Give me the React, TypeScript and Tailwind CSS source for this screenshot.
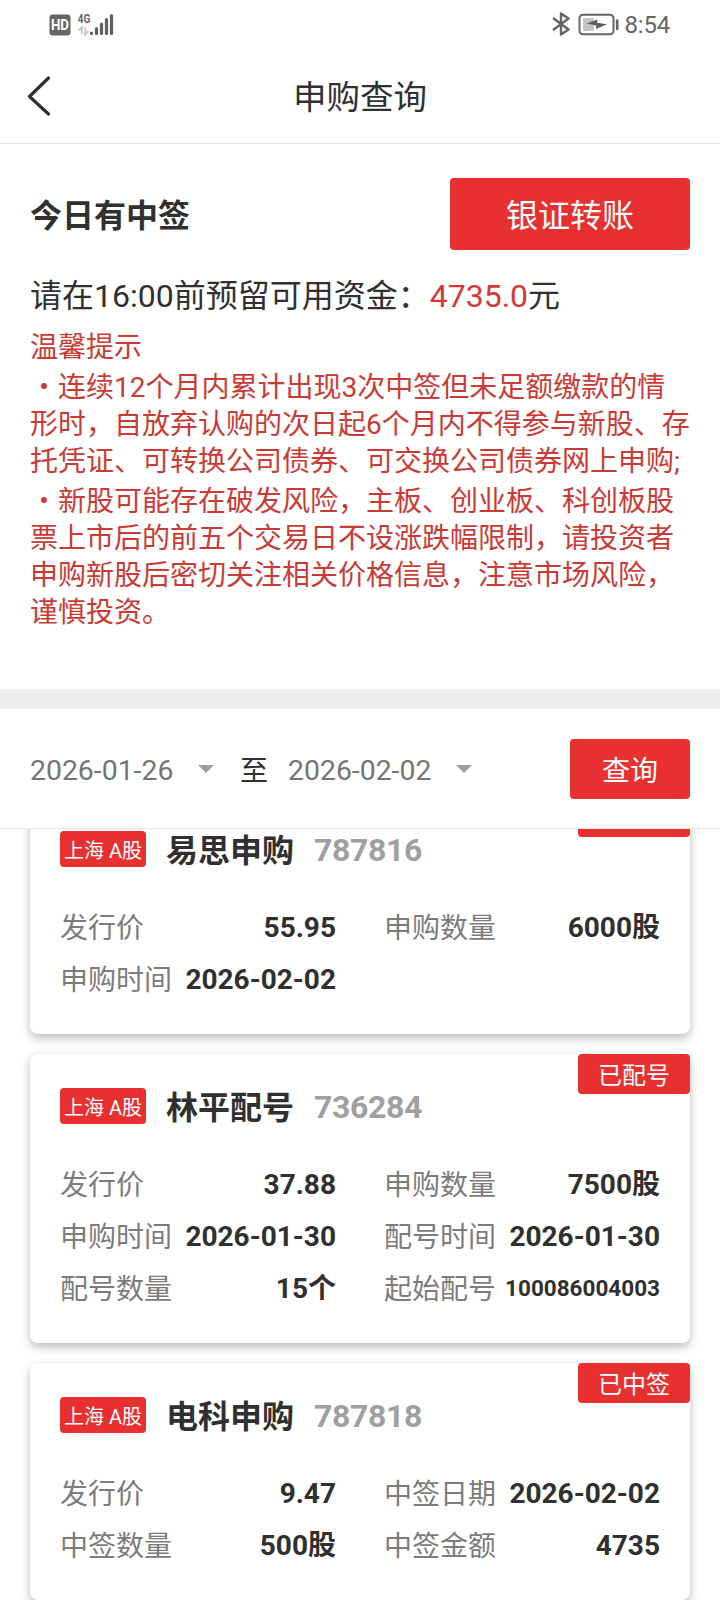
import React from 'react';

const notices = [
    {
        lines: [
            '・连续12个月内累计出现3次中签但未足额缴款的情',
            '形时，自放弃认购的次日起6个月内不得参与新股、存',
            '托凭证、可转换公司债券、可交换公司债券网上申购;'
        ]
    },
    {
        lines: [
            '・新股可能存在破发风险，主板、创业板、科创板股',
            '票上市后的前五个交易日不设涨跌幅限制，请投资者',
            '申购新股后密切关注相关价格信息，注意市场风险，',
            '谨慎投资。'
        ]
    }
];

type Field = { label: string; value: string; small?: boolean };

type Stock = {
    name: string;
    code: string;
    status: string;
    fields: Field[];
};

const stocks: Stock[] = [
    {
        name: '易思申购',
        code: '787816',
        status: '',
        fields: [
            { label: '发行价', value: '55.95' },
            { label: '申购数量', value: '6000股' },
            { label: '申购时间', value: '2026-02-02' }
        ]
    },
    {
        name: '林平配号',
        code: '736284',
        status: '已配号',
        fields: [
            { label: '发行价', value: '37.88' },
            { label: '申购数量', value: '7500股' },
            { label: '申购时间', value: '2026-01-30' },
            { label: '配号时间', value: '2026-01-30' },
            { label: '配号数量', value: '15个' },
            { label: '起始配号', value: '100086004003', small: true }
        ]
    },
    {
        name: '电科申购',
        code: '787818',
        status: '已中签',
        fields: [
            { label: '发行价', value: '9.47' },
            { label: '中签日期', value: '2026-02-02' },
            { label: '中签数量', value: '500股' },
            { label: '中签金额', value: '4735' }
        ]
    }
];

const StatusBar = () => (
    <div className="flex h-12 items-center justify-between pl-[49px] pr-[50px] text-[#666666]">
        <div className="flex items-center">
            <svg width="22" height="24" viewBox="0 0 22 24">
                <rect x="0.5" y="2.5" width="21" height="21" rx="3" fill="#666666" />
                <text x="11" y="18" textAnchor="middle" fontSize="14" fontWeight="700" fill="#ffffff" textLength="18" lengthAdjust="spacingAndGlyphs">HD</text>
            </svg>
            <svg className="ml-[6px]" width="38" height="32" viewBox="0 -4 38 32">
                <text x="0.8" y="11" fontSize="13.5" fontWeight="700" fill="#666666" textLength="12.5" lengthAdjust="spacingAndGlyphs">4G</text>
                <g stroke="#c8c8c8" strokeWidth="2" fill="none">
                    <path d="M1.5 18.5L4.8 15.5V22.5" />
                    <path d="M8.2 15.5V22.5L11.5 19" />
                </g>
                <g stroke="#5f5f5f" strokeWidth="3.2" strokeLinecap="round">
                    <path d="M14.5 21V21.5" />
                    <path d="M19.5 16.5V21.5" />
                    <path d="M24.5 12V21.5" />
                    <path d="M29.5 7.5V21.5" />
                    <path d="M34.5 3.5V21.5" />
                </g>
            </svg>
        </div>
        <div className="flex items-center">
            <svg width="20" height="24" viewBox="0 0 20 24">
                <path d="M2 6L17.5 17.5L10 22.5V1.5L17.5 6.5L2 18" fill="none" stroke="#666666" strokeWidth="2.4" strokeLinejoin="round" />
            </svg>
            <svg className="ml-[7px]" width="42" height="24" viewBox="0 0 42 24">
                <rect x="1.5" y="2.8" width="34" height="19.5" rx="3.5" fill="none" stroke="#666666" strokeWidth="2" />
                <rect x="5" y="6" width="11" height="13" rx="1.5" fill="#c4c4c4" />
                <path d="M8.5 11.5L19.5 7.5L19 10.8L29 12.2L18 17L18.2 13.6Z" fill="#5c5c5c" />
                <path d="M39.2 8.5V17" stroke="#666666" strokeWidth="2.6" strokeLinecap="round" />
            </svg>
            <span className="ml-[5px] pt-0.5 text-2xl leading-none tracking-[-0.2px]">8:54</span>
        </div>
    </div>
);

const DateSelect = ({ value }: { value: string }) => (
    <div className="flex items-center pt-[3px]">
        <span className="w-[144px] whitespace-nowrap pt-0.5 text-[28.4px] text-[#757575]">{value}</span>
        <svg className="mb-[2px] ml-[24px]" width="16" height="8" viewBox="0 0 16 8">
            <path d="M0 0H16L8 8Z" fill="#a0a0a0" />
        </svg>
    </div>
);

const StockCard = ({ stock }: { stock: Stock }) => (
    <div className="relative rounded-lg bg-white px-[30px] pt-[34px] pb-[28px] shadow-[0_4px_10px_rgba(0,0,0,0.27)]">
        <div className="absolute right-0 top-0 flex h-10 w-28 items-center justify-center rounded bg-[#e83030] pt-[3px] text-2xl text-white">
            {stock.status}
        </div>
        <div className="flex h-9 items-center gap-5">
            <span className="flex h-9 w-[86px] items-center justify-center rounded bg-[#e83030] pt-[3px] text-[20px] whitespace-nowrap text-white">
                上海 A股
            </span>
            <span className="pt-[3px] text-[32px] leading-9 font-bold text-[#303030]">{stock.name}</span>
            <span className="pt-0.5 text-[32px] leading-9 font-bold tracking-[-0.35px] text-[#a0a0a0]">{stock.code}</span>
        </div>
        <div className="mt-[35px] grid grid-cols-2 gap-x-12">
            {stock.fields.map((field) => (
                <div key={field.label} className="flex h-[52px] items-center justify-between whitespace-nowrap">
                    <span className="pt-0.5 text-[28px] text-[#7c7c7c]">{field.label}</span>
                    <span className={field.small ? 'text-[22.5px] font-bold text-[#303030]' : 'text-[28px] font-bold text-[#303030]'}>
                        {field.value}
                    </span>
                </div>
            ))}
        </div>
    </div>
);

export default function App() {
    return (
        <div
            lang="zh-CN"
            className="flex h-[1600px] w-[720px] flex-col overflow-hidden bg-white font-[Roboto,'Noto_Sans_CJK_SC',sans-serif] text-[#303030]"
        >
            <StatusBar />

            {/* Title bar */}
            <div className="flex h-24 shrink-0 items-center border-b border-[#e8e8e8] px-[27px]">
                <svg width="24" height="40" viewBox="0 0 24 40">
                    <path d="M21.5 2L2.5 20.5L21.5 38" fill="none" stroke="#303030" strokeWidth="3.2" strokeLinecap="round" strokeLinejoin="round" />
                </svg>
                <h1 className="flex-1 pt-[6px] pr-6 text-center text-[33.5px]">申购查询</h1>
            </div>

            {/* Winning notice */}
            <div className="h-[545px] shrink-0 px-[30px] pt-[34px]">
                <div className="flex h-[72px] items-center justify-between">
                    <h2 className="pt-[3px] text-[32px] font-bold">今日有中签</h2>
                    <button className="h-[72px] w-60 rounded bg-[#e83030] pt-[3px] text-[32px] text-white">银证转账</button>
                </div>
                <p className="mt-[22px] text-[32px] leading-[48px] whitespace-nowrap">
                    请在16:00前预留可用资金：<span className="text-[#d33a36]">4735.0</span>元
                </p>
                <div className="mt-[9px] space-y-[3px] text-[28px] leading-[37px] whitespace-nowrap text-[#cc3a36]">
                    <p>温馨提示</p>
                    {notices.map((notice, index) => (
                        <div key={index}>
                            {notice.lines.map((line) => (
                                <p key={line}>{line}</p>
                            ))}
                        </div>
                    ))}
                </div>
            </div>

            <div className="h-5 shrink-0 bg-[#ededed]" />

            {/* Date filter */}
            <div className="flex h-[120px] shrink-0 items-center border-b border-[#e8e8e8] px-[30px]">
                <DateSelect value="2026-01-26" />
                <span className="mr-5 ml-[26px] pt-[7px] text-[28px]">至</span>
                <DateSelect value="2026-02-02" />
                <button className="ml-auto h-[60px] w-[120px] rounded bg-[#e83030] pt-[6px] text-[28px] text-white">查询</button>
            </div>

            {/* Records, scrolled slightly */}
            <div className="flex-1 overflow-hidden px-[30px]">
                <div className="-mt-8 flex flex-col gap-5">
                    {stocks.map((stock) => (
                        <StockCard key={stock.code} stock={stock} />
                    ))}
                </div>
            </div>
        </div>
    );
}
